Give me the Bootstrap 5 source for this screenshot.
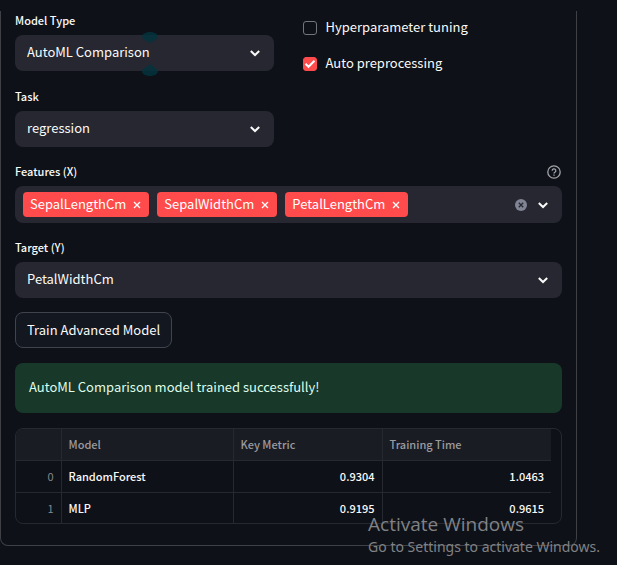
<!DOCTYPE html>
<html lang="en" data-bs-theme="dark">
<head>
<meta charset="utf-8">
<meta name="viewport" content="width=device-width, initial-scale=1">
<title>Model training</title>
<link rel="stylesheet" href="https://cdn.jsdelivr.net/npm/bootstrap@5.3.0/dist/css/bootstrap.min.css">
<style>
body{background:#0e1117;color:#fafafa;font-family:"Noto Sans CJK SC",sans-serif;font-size:13px;line-height:20px;font-weight:400}
.page{padding:11px 40px 19px 0}
.panel{border:1px solid #3e4045;border-top:0;border-radius:0 0 8px 8px;padding:0 14px 21px}
.stack{display:flex;flex-direction:column;gap:15px}
.split{--bs-gutter-x:30px}
.field-label{font-size:11px;font-weight:500;line-height:18px;margin-bottom:6px;display:block}
.field-select,[data-bs-theme=dark] .field-select{background-color:#262730;border:0;border-radius:8px;height:36px;padding:0 36px 2px 12px;font-size:13px;color:#fafafa;background-position:right 12px center;background-size:14px 14px;
background-image:url("data:image/svg+xml,%3Csvg xmlns='http://www.w3.org/2000/svg' viewBox='0 0 14 14'%3E%3Cpath d='M2.800 5l4.200 4 4.200-4' fill='none' stroke='%23fafafa' stroke-width='2'/%3E%3C/svg%3E")}
.checks{padding-top:6px;gap:14px;margin-left:-1px}
.check-line{min-height:22px;gap:9px}
.check-line label{padding-bottom:2px}
.check-line .form-check-input{width:14px;height:14px;margin:0;border:1px solid #73757d;border-radius:3px;background-color:transparent}
.check-line .form-check-input:checked{background-color:#ff4b4b;border-color:#ff4b4b;background-size:14px 14px;
background-image:url("data:image/svg+xml,%3Csvg xmlns='http://www.w3.org/2000/svg' viewBox='0 0 14 14'%3E%3Cpath d='M2.5 6.8l3 3 6-6' fill='none' stroke='%23fff' stroke-width='2'/%3E%3C/svg%3E")}
.multi{background:#262730;border-radius:8px;padding:6px 12px 6px 8px}
.tags{gap:8px}
.chip{background:#ff4b4b;border-radius:4px;height:25px;padding:0 8px 0 7px;gap:7px;color:#fff}
.chip>span{padding-bottom:2px}
.bare{background:none;border:0;padding:0;display:flex;color:inherit}
.train{--bs-btn-color:#fafafa;--bs-btn-bg:#131720;--bs-btn-border-color:#41444c;--bs-btn-border-radius:8px;--bs-btn-font-size:13px;--bs-btn-line-height:20px;--bs-btn-padding-y:7px;--bs-btn-padding-x:11px}
.train-row{margin-top:-1px}
.notice{background:#183829;color:#dffde9;border:0;border-radius:8px;padding:14px 14px 16px}
.grid-box{border:1px solid #262930;border-radius:8px;overflow:hidden;padding-right:10px}
.grid{--bs-table-bg:transparent;font-size:11px;table-layout:fixed;line-height:20px}
.grid th,.grid td{padding:5px 7px 6px;border:0;border-right:1px solid #262930;border-bottom:1px solid #262930;font-weight:500}
.grid tr>:last-child{border-right:0}
.grid tbody tr:last-child>*{border-bottom:0;padding-bottom:5px}
.grid thead th{background:#1a1c24;color:#9a9b9f}
.grid tbody th{color:#85878c;font-weight:400}
.grid tbody td{color:#fafafa}
.grid .idx{width:45px}.grid .c-model{width:172px}.grid .c-key{width:149px}
.handles{position:absolute;left:142px;top:20px;margin-left:-15px;pointer-events:none}
.os-note{position:absolute;right:17px;bottom:8px;color:#808286;font-family:"Noto Sans",sans-serif;font-size:14px;pointer-events:none}
.os-title{font-family:"Open Sans",sans-serif;font-size:19px;line-height:26px}
</style>
</head>
<body>
<main class="page position-relative">
<div class="panel"><div class="stack">
<div class="row split">
<div class="col-6 d-flex flex-column gap-3">
<div class="position-relative"><label class="field-label" for="mt">Model Type</label>
<select class="form-select field-select" id="mt"><option>AutoML Comparison</option></select>
<svg class="handles" width="16" height="46" aria-hidden="true"><path d="M0 5.500C1-.5 15-.5 16 5.500 16 8 11 10 8 12 5 10 0 8 0 5.500zM0 40.500C0 38 5 36 8 33c3 3 8 5 8 7.500-1 6-15 6-16 0z" fill="#033540" fill-opacity=".8"/></svg></div>
<div><label class="field-label" for="tk">Task</label>
<select class="form-select field-select" id="tk"><option>regression</option></select></div>
</div>
<div class="col-6"><div class="checks d-flex flex-column">
<div class="check-line d-flex align-items-center"><input class="form-check-input" type="checkbox" id="hp"><label for="hp">Hyperparameter tuning</label></div>
<div class="check-line d-flex align-items-center"><input class="form-check-input" type="checkbox" id="ap" checked><label for="ap">Auto preprocessing</label></div>
</div></div>
</div>
<div role="group" aria-labelledby="fx">
<div class="d-flex justify-content-between align-items-start"><span class="field-label" id="fx">Features (X)</span>
<button class="bare pt-1" type="button" aria-label="Help"><svg width="16" height="14" viewBox="0 2 16 14" fill="none" stroke="#a3a4a8" stroke-width="1.300" overflow="visible"><circle cx="8" cy="8" r="6.200"/><path d="M6.200 6.700a1.800 1.800 0 1 1 2.700 1.500c-.6.400-.9.700-.9 1.300M8 10.500v1.300"/></svg></button></div>
<div class="multi d-flex align-items-center">
<div class="tags d-flex flex-wrap flex-grow-1">
<span class="chip d-flex align-items-center"><span>SepalLengthCm</span><button class="bare" type="button" aria-label="Remove SepalLengthCm"><svg width="8" height="8" stroke="#fff" stroke-width="1.300"><path d="M1 1l6 6M7 1L1 7"/></svg></button></span>
<span class="chip d-flex align-items-center"><span>SepalWidthCm</span><button class="bare" type="button" aria-label="Remove SepalWidthCm"><svg width="8" height="8" stroke="#fff" stroke-width="1.300"><path d="M1 1l6 6M7 1L1 7"/></svg></button></span>
<span class="chip d-flex align-items-center"><span>PetalLengthCm</span><button class="bare" type="button" aria-label="Remove PetalLengthCm"><svg width="8" height="8" stroke="#fff" stroke-width="1.300"><path d="M1 1l6 6M7 1L1 7"/></svg></button></span>
</div>
<div class="d-flex align-items-center gap-2">
<button class="bare" type="button" aria-label="Clear all"><svg width="14" height="14"><circle cx="7" cy="7" r="6" fill="#808495"/><path d="M4.800 4.800l4.400 4.400M9.200 4.800L4.800 9.200" stroke="#262730" stroke-width="1.300"/></svg></button>
<button class="bare" type="button" aria-label="Open"><svg width="14" height="14" fill="none" stroke="#fafafa" stroke-width="2"><path d="M2.800 5l4.200 4 4.200-4"/></svg></button>
</div></div></div>
<div><label class="field-label" for="ty">Target (Y)</label>
<select class="form-select field-select" id="ty"><option>PetalWidthCm</option></select></div>
<div class="train-row d-flex"><button class="btn train" type="button">Train Advanced Model</button></div>
<div class="alert notice m-0" role="alert">AutoML Comparison model trained successfully!</div>
<div class="grid-box"><table class="table grid m-0">
<thead><tr><th class="idx"></th><th class="c-model">Model</th><th class="c-key">Key Metric</th><th>Training Time</th></tr></thead>
<tbody><tr><th class="text-end" scope="row">0</th><td>RandomForest</td><td class="text-end">0.9304</td><td class="text-end">1.0463</td></tr>
<tr><th class="text-end" scope="row">1</th><td>MLP</td><td class="text-end">0.9195</td><td class="text-end">0.9615</td></tr></tbody>
</table></div>
</div></div>
<div class="os-note"><div class="os-title">Activate Windows</div><div>Go to Settings to activate Windows.</div></div>
</main>
<script src="https://cdn.jsdelivr.net/npm/bootstrap@5.3.0/dist/js/bootstrap.bundle.min.js"></script>
</body>
</html>
